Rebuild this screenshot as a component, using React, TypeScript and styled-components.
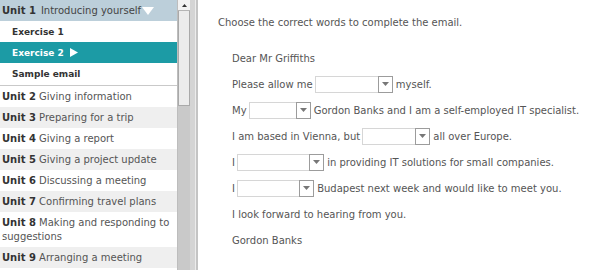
import styled, { createGlobalStyle } from "styled-components";

const GlobalStyle = createGlobalStyle`
  html, body {
    margin: 0;
    padding: 0;
    background: #ffffff;
  }
  body {
    font-family: "DejaVu Sans", Verdana, sans-serif;
    font-size: 10px;
  }
`;

const units = [
  { n: 2, title: "Giving information" },
  { n: 3, title: "Preparing for a trip" },
  { n: 4, title: "Giving a report" },
  { n: 5, title: "Giving a project update" },
  { n: 6, title: "Discussing a meeting" },
  { n: 7, title: "Confirming travel plans" },
  { n: 8, title: "Making and responding to suggestions" },
  { n: 9, title: "Arranging a meeting" },
];

const Select = ({ width }: { width: number }) => (
  <SelectBox $width={width}>
    <SelectArrow>
      <svg width="7" height="4" viewBox="0 0 7 4">
        <path d="M0 0 L7 0 L3.5 4 Z" fill="#777" />
      </svg>
    </SelectArrow>
  </SelectBox>
);

const App = () => {
  return (
    <Page>
      <GlobalStyle />
      <SideBar>
        <NavList>
          <UnitHeader>
            <b>Unit 1</b> Introducing yourself
            <svg width="12" height="8" viewBox="0 0 12 8">
              <path d="M0 0 L12 0 L6 8 Z" fill="#ffffff" />
            </svg>
          </UnitHeader>
          <SubItem>Exercise 1</SubItem>
          <SubItem $active>
            Exercise 2
            <svg width="8" height="9" viewBox="0 0 8 9">
              <path d="M0 0 L8 4.5 L0 9 Z" fill="#ffffff" />
            </svg>
          </SubItem>
          <SubItem $last>Sample email</SubItem>
          {units.map((u, i) => (
            <UnitRow key={u.n} $alt={i % 2 === 1}>
              <b>Unit {u.n}</b> {u.title}
            </UnitRow>
          ))}
        </NavList>
        <ScrollBar>
          <ScrollButton>
            <svg width="5" height="3" viewBox="0 0 5 3">
              <path d="M0 3 L2.5 0 L5 3 Z" fill="#333" />
            </svg>
          </ScrollButton>
          <ScrollThumb />
        </ScrollBar>
      </SideBar>
      <Divider />
      <Content>
        <Instruction>Choose the correct words to complete the email.</Instruction>
        <Letter>
          <Line>Dear Mr Griffiths</Line>
          <Line>
            Please allow me<Select width={78} /> myself.
          </Line>
          <Line>
            My<Select width={62} /> Gordon Banks and I am a self-employed IT specialist.
          </Line>
          <Line>
            I am based in Vienna, but<Select width={68} /> all over Europe.
          </Line>
          <Line>
            I<Select width={87} /> in providing IT solutions for small companies.
          </Line>
          <Line>
            I<Select width={77} /> Budapest next week and would like to meet you.
          </Line>
          <Line>I look forward to hearing from you.</Line>
          <Line>Gordon Banks</Line>
        </Letter>
      </Content>
    </Page>
  );
};

export default App;

const Page = styled.div`
  display: flex;
  width: 604px;
  height: 270px;
  overflow: hidden;
  color: #555;
`;

const SideBar = styled.div`
  display: flex;
  width: 190px;
  flex-shrink: 0;
  background: #ffffff;
`;

const NavList = styled.div`
  width: 178px;
  display: flex;
  flex-direction: column;
`;

const UnitHeader = styled.div`
  display: flex;
  align-items: center;
  gap: 1px;
  height: 21px;
  padding-left: 2px;
  background: #bccfda;
  color: #444;
  white-space: nowrap;

  b {
    color: #333;
    margin-right: 4px;
  }
`;

const SubItem = styled.div<{ $active?: boolean; $last?: boolean }>`
  display: flex;
  align-items: center;
  gap: 6px;
  height: 21px;
  padding-left: 12px;
  font-weight: bold;
  font-size: 9px;
  color: ${(p) => (p.$active ? "#ffffff" : "#333")};
  background: ${(p) => (p.$active ? "#1c9ba5" : "#ffffff")};
  border-bottom: ${(p) => (p.$last ? "1px solid #c9c9c9" : "none")};
  padding-bottom: ${(p) => (p.$last ? "1px" : "0")};
`;

const UnitRow = styled.div<{ $alt: boolean }>`
  padding: 4px 2px 3px 2px;
  line-height: 14px;
  background: ${(p) => (p.$alt ? "#efefef" : "#ffffff")};
  color: #555;

  b {
    color: #333;
  }
`;

const ScrollBar = styled.div`
  width: 12px;
  display: flex;
  flex-direction: column;
  background: #c9c9c9;
  border-left: 1px solid #bdbdbd;
`;

const ScrollButton = styled.div`
  height: 10px;
  display: flex;
  align-items: center;
  justify-content: center;
  background: #f2f2f2;
  border-bottom: 1px solid #b5b5b5;
`;

const ScrollThumb = styled.div`
  height: 94px;
  background: #ececec;
  border: 1px solid #a9a9a9;
  border-top: none;
`;

const Divider = styled.div`
  width: 6px;
  flex-shrink: 0;
  background: #d4d4d4;
  border-right: 2px solid #c4c4c4;
  box-shadow: inset -1px 0 0 #ececec;
`;

const Content = styled.div`
  flex: 1;
  padding: 16px 0 0 20px;
`;

const Instruction = styled.div`
  line-height: 13px;
  margin-bottom: 21px;
`;

const Letter = styled.div`
  display: flex;
  flex-direction: column;
  padding-left: 14px;
  gap: 10px;
`;

const Line = styled.div`
  display: flex;
  align-items: center;
  height: 16px;
  white-space: pre;
`;

const SelectBox = styled.span<{ $width: number }>`
  display: inline-flex;
  justify-content: flex-end;
  width: ${(p) => p.$width}px;
  height: 17px;
  margin-left: 2px;
  box-sizing: border-box;
  border: 1px solid #d6d6d6;
  background: #ffffff;
`;

const SelectArrow = styled.span`
  width: 15px;
  height: 17px;
  margin: -1px -1px -1px 0;
  box-sizing: border-box;
  border: 1px solid #9c9c9c;
  display: flex;
  align-items: center;
  justify-content: center;
`;
